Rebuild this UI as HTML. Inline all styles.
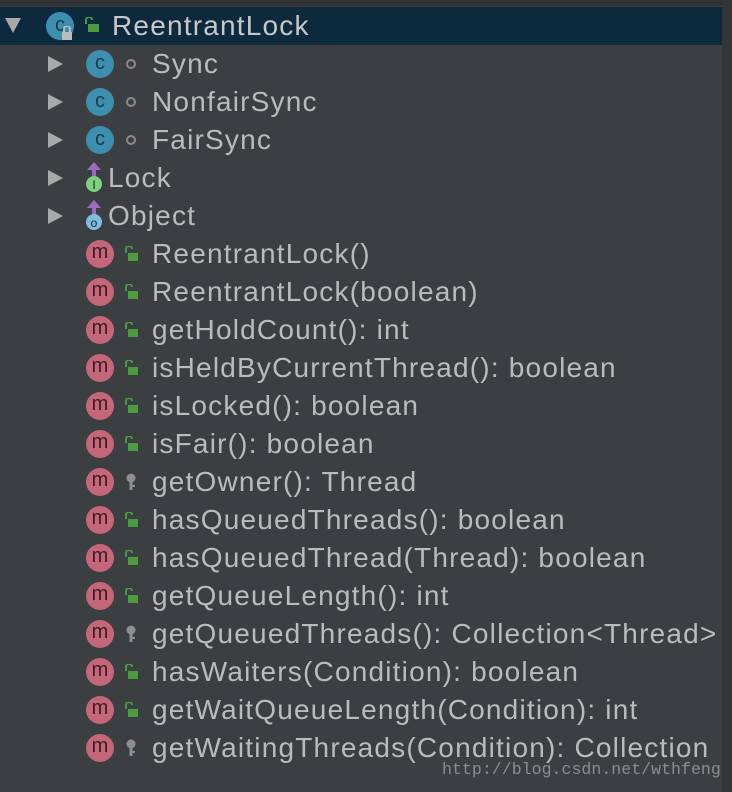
<!DOCTYPE html>
<html><head><meta charset="utf-8"><style>
body{margin:0;width:732px;height:792px;background:#3c3f41;overflow:hidden;font-family:"Liberation Sans",sans-serif;position:relative}
.top{position:absolute;left:0;top:0;width:732px;height:6px;background:#2f3133}
.sel{position:absolute;left:0;top:7px;width:722px;height:38px;background:#0d293e}
.rs{position:absolute;right:0;top:0;width:10px;height:792px;background:#333537}
.r{position:absolute;height:38px;line-height:38px;font-size:28px;letter-spacing:1.2px;color:#bbbbbb;white-space:nowrap}
.tri{position:absolute;width:0;height:0;border-top:8px solid transparent;border-bottom:8px solid transparent;border-left:15px solid #a9a9a9}
.m{position:absolute;width:28px;height:28px;border-radius:50%;background:#c5677a;color:#3c1b22;font-size:20px;line-height:25px;text-align:center}
.c{position:absolute;width:28px;height:28px;border-radius:50%;background:#3d8fb0;color:#1c3a48;font-size:20px;line-height:27px;text-align:center}
.wm{position:absolute;left:442px;top:760px;font-family:"Liberation Mono",monospace;font-size:16.6px;color:#8a8c8e}
</style></head><body>
<div class="top"></div><div class="sel"></div><div class="rs"></div>
<div class="tri" style="left:5px;top:18px;border-left:8px solid transparent;border-right:8px solid transparent;border-top:15px solid #a9a9a9;border-bottom:0"></div>
<div class="c" style="left:46px;top:12px">c</div>
<svg style="position:absolute;left:60px;top:26px" width="14" height="14"><rect x="2" y="6" width="10" height="8" fill="#bbb"/><path d="M4 6V3a3 3 0 0 1 6 0v3" stroke="#bbb" stroke-width="2" fill="none"/></svg>
<svg style="position:absolute;left:84px;top:17px" width="16" height="16"><rect x="4" y="7" width="11" height="8" fill="#4a9c3e"/><path d="M2 7V3a3 3 0 0 1 6 0" stroke="#4a9c3e" stroke-width="2" fill="none"/></svg>
<div class="r" style="left:112px;top:7px;color:#c8c8c8">ReentrantLock</div>

<script>
var rows=[
["t","c","Sync",64],["t","c","NonfairSync",102],["t","c","FairSync",140],["t","i","Lock",178],["t","o","Object",216],
["","m","ReentrantLock()",254,"u"],["","m","ReentrantLock(boolean)",292,"u"],["","m","getHoldCount(): int",330,"u"],
["","m","isHeldByCurrentThread(): boolean",368,"u"],["","m","isLocked(): boolean",406,"u"],["","m","isFair(): boolean",444,"u"],
["","m","getOwner(): Thread",482,"k"],["","m","hasQueuedThreads(): boolean",520,"u"],["","m","hasQueuedThread(Thread): boolean",558,"u"],
["","m","getQueueLength(): int",596,"u"],["","m","getQueuedThreads(): Collection<Thread>",634,"k"],["","m","hasWaiters(Condition): boolean",672,"u"],
["","m","getWaitQueueLength(Condition): int",710,"u"],["","m","getWaitingThreads(Condition): Collection",748,"k"]];
var h="";
rows.forEach(function(r){var y=r[3];
if(r[0])h+='<div class="tri" style="left:48px;top:'+(y-8)+'px"></div>';
if(r[1]=="c"){h+='<div class="c" style="left:86px;top:'+(y-14)+'px">c</div><div style="position:absolute;left:126px;top:'+(y-5)+'px;width:6px;height:6px;border:2px solid #8a8a8a;border-radius:50%"></div><div class="r" style="left:152px;top:'+(y-19)+'px">'+r[2]+'</div>';}
else if(r[1]=="i"||r[1]=="o"){var col=r[1]=="i"?"#7fd07c":"#7cbde0";h+='<svg style="position:absolute;left:84px;top:'+(y-16)+'px" width="20" height="32"><path d="M10 0L3 8h5v8h4V8h5z" fill="#9a6bc0"/><circle cx="10" cy="22" r="8" fill="'+col+'"/><text x="10" y="27" font-size="12" text-anchor="middle" fill="#222" font-family="Liberation Sans">'+(r[1]=="i"?"I":"o")+'</text></svg><div class="r" style="left:108px;top:'+(y-19)+'px">'+r[2]+'</div>';}
else{h+='<div class="m" style="left:86px;top:'+(y-14)+'px">m</div>';
if(r[4]=="u")h+='<svg style="position:absolute;left:124px;top:'+(y-8)+'px" width="16" height="16"><rect x="4" y="7" width="10" height="8" fill="#4a9c3e"/><path d="M2 7V3a3 3 0 0 1 6 0" stroke="#4a9c3e" stroke-width="2" fill="none"/></svg>';
else h+='<svg style="position:absolute;left:124px;top:'+(y-9)+'px" width="14" height="18"><circle cx="7" cy="5" r="4.5" fill="#8e8e8e"/><rect x="5.5" y="8" width="3" height="9" fill="#8e8e8e"/><rect x="8" y="12" width="3" height="2" fill="#8e8e8e"/></svg>';
h+='<div class="r" style="left:152px;top:'+(y-19)+'px">'+r[2].replace(/</g,"&lt;").replace(/>/g,"&gt;")+'</div>';}
});
document.write(h);
</script>
<div class="wm">http://blog.csdn.net/wthfeng</div>
</body></html>
